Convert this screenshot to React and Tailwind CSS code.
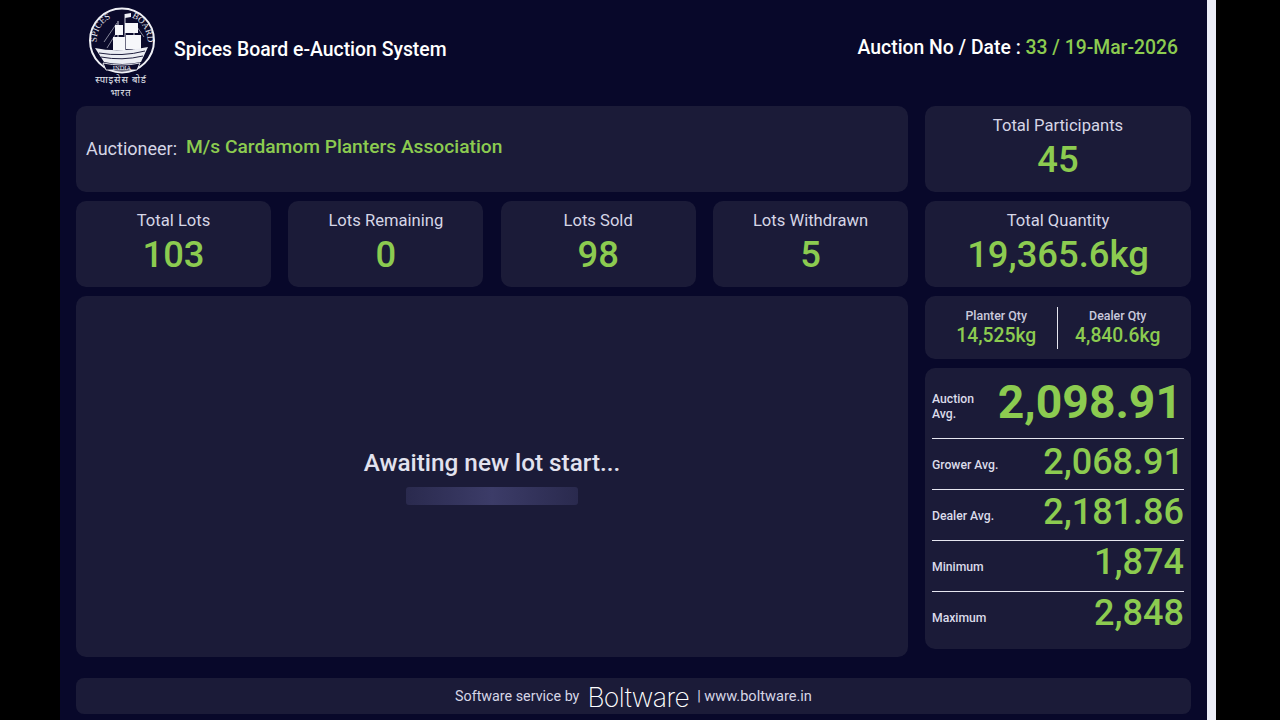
const font = { fontFamily: "Roboto, 'Noto Sans', sans-serif" };

function Logo() {
  return (
    <svg width="70" height="94" viewBox="0 0 70 94" className="shrink-0">
      <defs>
        <path id="arcTop" d="M10.5 42 A25.5 25.5 0 1 1 59.5 42" fill="none" />
      </defs>
      <circle cx="35" cy="34.5" r="32" fill="#0a0a2b" stroke="#f0f1f6" strokeWidth="2" />
      <path d="M38 8v36M31 15v29M47 17v27" stroke="#e6e8f0" strokeWidth="0.9" />
      <path d="M17 36 L30 17 M20 42 L30 26 M48 18 L57 31" stroke="#d8dae4" strokeWidth="0.6" />
      <text fontSize="9" fill="#e6e8f0" fontFamily="'Liberation Serif', serif">
        <textPath href="#arcTop" startOffset="6">SPICES</textPath>
      </text>
      <text fontSize="9" fill="#e6e8f0" fontFamily="'Liberation Serif', serif">
        <textPath href="#arcTop" startOffset="57">BOARD</textPath>
      </text>
      <path d="M38 8 l6 -1 v4 l-6 1z" fill="#eef0f6" />
      <path d="M28 19 h8 v10 h-8z" fill="#f6f7fa" />
      <path d="M38 17 h13 v10 h-13z" fill="#f6f7fa" />
      <path d="M26 31 h12 v13 h-12z" fill="#f6f7fa" />
      <path d="M39 29 h15 v14 h-15z" fill="#f6f7fa" />
      <path d="M8 42 Q30 47 61 41 L54 56 Q35 60 17 56Z" fill="#eceef4" />
      <path d="M12 47 Q35 51 58 45 M14 51 Q35 55 56 50" stroke="#0a0a2b" strokeWidth="0.9" fill="none" />
      <path d="M16 57 Q35 61 53 57 l-3 7 h-31z" fill="#0a0a2b" stroke="#f0f1f6" strokeWidth="0.9" />
      <text x="35" y="64" textAnchor="middle" fontSize="6.5" fill="#f0f1f6" fontFamily="'Liberation Serif', serif">INDIA</text>
      <text x="34" y="76.5" textAnchor="middle" fontSize="9.5" letterSpacing="0.9" fill="#e6e8f0" fontFamily="'Noto Sans', sans-serif">स्पाइसेस बोर्ड</text>
      <text x="34" y="90" textAnchor="middle" fontSize="9.5" letterSpacing="0.9" fill="#e6e8f0" fontFamily="'Noto Sans', sans-serif">भारत</text>
    </svg>
  );
}

function Stat({ label, value, wide }) {
  return (
    <div className={`flex h-[86px] flex-col items-center rounded-[10px] bg-[#1b1b38] pt-[10px] ${wide ? "w-[266px]" : "w-[195px]"}`}>
      <div className="text-[16.6px] leading-[20px] text-[#d6d6e6]">{label}</div>
      <div className="mt-[1px] text-[36.4px] leading-[46px] font-medium text-[#8ccb50]">{value}</div>
    </div>
  );
}

function Qty({ label, value }) {
  return (
    <div className="flex flex-1 flex-col items-center">
      <div className="text-[12.4px] leading-[16px] font-medium text-[#c9c9dc]">{label}</div>
      <div className="text-[19.3px] leading-[24px] font-medium text-[#8ccb50]">{value}</div>
    </div>
  );
}

function AvgRow({ label, value, size, border, h, labelShift }) {
  return (
    <div className={`flex items-center justify-between ${border ? "border-b border-[#e6e6f0]" : ""} ${h}`}>
      <div className={`w-[60px] whitespace-nowrap text-[12.2px] leading-[15px] font-medium text-[#dcdcea] ${labelShift}`}>{label}</div>
      <div className={`text-[#8ccb50] ${size}`}>{value}</div>
    </div>
  );
}

export default function App() {
  return (
    <div style={font} className="flex h-[720px] w-[1280px] overflow-hidden bg-black pl-[60px]">
      <div className="flex h-[720px] w-[1147px] flex-col bg-[#08082a] px-[16px]">
        <header className="flex h-[106px] items-start">
          <div className="ml-[11px] mt-[6px] h-[94px]"><Logo /></div>
          <div className="ml-[17px] mt-[39px] text-[19.4px] leading-[22px] font-medium whitespace-nowrap text-white">Spices Board e-Auction System</div>
          <div className="ml-auto mr-[13px] mt-[36px] text-[19.35px] leading-[24px] font-medium whitespace-nowrap text-white">
            Auction No / Date : <span className="text-[#8ccb50]">33 / 19-Mar-2026</span>
          </div>
        </header>

        <div className="flex gap-[17px]">
          <div className="flex w-[832px] flex-col gap-[9px]">
            <div className="flex h-[86px] items-start rounded-[10px] bg-[#1b1b38] pl-[10px] pt-[29px]">
              <span className="mt-[3px] text-[18px] leading-[22px] text-[#d6d6e6]">Auctioneer:</span>
              <span className="ml-[9px] text-[19.2px] leading-[24px] font-medium text-[#8ccb50]">M/s Cardamom Planters Association</span>
            </div>
            <div className="flex justify-between">
              <Stat label="Total Lots" value="103" />
              <Stat label="Lots Remaining" value="0" />
              <Stat label="Lots Sold" value="98" />
              <Stat label="Lots Withdrawn" value="5" />
            </div>
            <div className="flex h-[361px] flex-col items-center rounded-[10px] bg-[#1b1b38] pt-[151px]">
              <div className="text-[24.3px] leading-[32px] font-medium text-[#e2e2ee]">Awaiting new lot start...</div>
              <div className="mt-[8px] h-[18px] w-[172px] rounded-[3px] bg-gradient-to-r from-[#2a2a4e] via-[#3c3c68] to-[#2a2a4e]" />
            </div>
          </div>

          <div className="flex w-[266px] flex-col gap-[9px]">
            <Stat wide label="Total Participants" value="45" />
            <Stat wide label="Total Quantity" value="19,365.6kg" />
            <div className="flex h-[63px] items-center rounded-[10px] bg-[#1b1b38] pl-[11px] pr-[13px]">
              <Qty label="Planter Qty" value="14,525kg" />
              <div className="h-[42px] w-px bg-[#e6e6f0]" />
              <Qty label="Dealer Qty" value="4,840.6kg" />
            </div>
            <div className="flex h-[281px] flex-col rounded-[10px] bg-[#1b1b38] px-[7px] pt-[1px]">
              <AvgRow border h="h-[70px]" labelShift="mt-[6px]" label={<>Auction<br />Avg.</>} value="2,098.91" size="mb-[4px] mr-[2px] text-[46.3px] leading-[56px] font-bold" />
              <AvgRow border h="h-[51px]" labelShift="mt-[3px]" label="Grower Avg." value="2,068.91" size="mb-[4px] text-[36px] leading-[44px] font-medium" />
              <AvgRow border h="h-[51px]" labelShift="mt-[3px]" label="Dealer Avg." value="2,181.86" size="mb-[6px] text-[36px] leading-[44px] font-medium" />
              <AvgRow border h="h-[51px]" labelShift="mt-[3px]" label="Minimum" value="1,874" size="mb-[8px] text-[36px] leading-[44px] font-medium" />
              <AvgRow h="h-[51px]" labelShift="mt-[1px]" label="Maximum" value="2,848" size="mb-[10px] text-[36px] leading-[44px] font-medium" />
            </div>
          </div>
        </div>

        <footer className="mt-[21px] flex h-[36px] items-center justify-center rounded-[8px] bg-[#1b1b38] pt-[1px] text-[14.3px] text-[#d6d6e6]">
          <span>Software service by</span>
          <span style={{ fontFamily: "Inter, sans-serif" }} className="mx-[8px] text-[26.5px] leading-[30px] font-extralight tracking-[-0.6px] text-white">Boltware</span>
          <span className="text-[14.6px]">| www.boltware.in</span>
        </footer>
      </div>
      <div className="h-[720px] w-[9px] bg-[#eceef8]" />
    </div>
  );
}
